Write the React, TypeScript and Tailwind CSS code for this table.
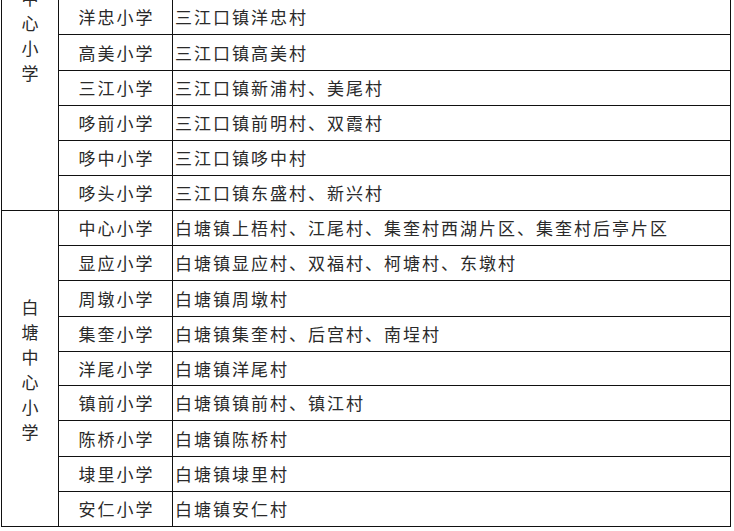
import React from "react";

type Row = { name: string; area: string; h: number };

const heightClass: Record<number, string> = {
  34: "h-[34px]",
  35: "h-[35px]",
  36: "h-[36px]",
};

const sanjiang: Row[] = [
  { name: "洋忠小学", area: "三江口镇洋忠村", h: 35 },
  { name: "高美小学", area: "三江口镇高美村", h: 36 },
  { name: "三江小学", area: "三江口镇新浦村、美尾村", h: 35 },
  { name: "哆前小学", area: "三江口镇前明村、双霞村", h: 35 },
  { name: "哆中小学", area: "三江口镇哆中村", h: 35 },
  { name: "哆头小学", area: "三江口镇东盛村、新兴村", h: 35 },
];

const baitang: Row[] = [
  { name: "中心小学", area: "白塘镇上梧村、江尾村、集奎村西湖片区、集奎村后亭片区", h: 35 },
  { name: "显应小学", area: "白塘镇显应村、双福村、柯塘村、东墩村", h: 35 },
  { name: "周墩小学", area: "白塘镇周墩村", h: 36 },
  { name: "集奎小学", area: "白塘镇集奎村、后宫村、南埕村", h: 35 },
  { name: "洋尾小学", area: "白塘镇洋尾村", h: 34 },
  { name: "镇前小学", area: "白塘镇镇前村、镇江村", h: 35 },
  { name: "陈桥小学", area: "白塘镇陈桥村", h: 36 },
  { name: "埭里小学", area: "白塘镇埭里村", h: 35 },
  { name: "安仁小学", area: "白塘镇安仁村", h: 35 },
];

function SchoolRow({ row }: { row: Row }) {
  return (
    <div className={`flex border-b border-[#111] ${heightClass[row.h]}`}>
      <div className="w-[114px] shrink-0 border-r border-[#111] flex items-center justify-center pl-[2px]">
        {row.name}
      </div>
      <div className="flex-1 flex items-center pl-[2px] whitespace-nowrap">{row.area}</div>
    </div>
  );
}

function Group({ title, rows, top }: { title: string; rows: Row[]; top?: boolean }) {
  return (
    <div className="flex">
      <div
        className={`w-[57px] shrink-0 border-r border-b border-[#111] overflow-hidden flex flex-col items-center tracking-normal leading-[25px] ${
          top ? "h-[211px] justify-end pb-[125px]" : "h-[316px] justify-center"
        }`}
      >
        {title.split("").map((c, i) => (
          <div key={i} className="shrink-0">
            {c}
          </div>
        ))}
      </div>
      <div className="flex-1">
        {rows.map((r) => (
          <SchoolRow key={r.name} row={r} />
        ))}
      </div>
    </div>
  );
}

export default function App() {
  return (
    <div
      className="w-[734px] h-[531px] bg-white overflow-hidden text-[17px] tracking-[2px] text-[#2a2a2a]"
      style={{ fontFamily: '"Noto Sans CJK SC", "Noto Sans", sans-serif' }}
    >
      <div className="ml-[1px] w-[730px] border-l border-r border-[#111]">
        <Group title="三江口中心小学" rows={sanjiang} top />
        <Group title="白塘中心小学" rows={baitang} />
      </div>
    </div>
  );
}
